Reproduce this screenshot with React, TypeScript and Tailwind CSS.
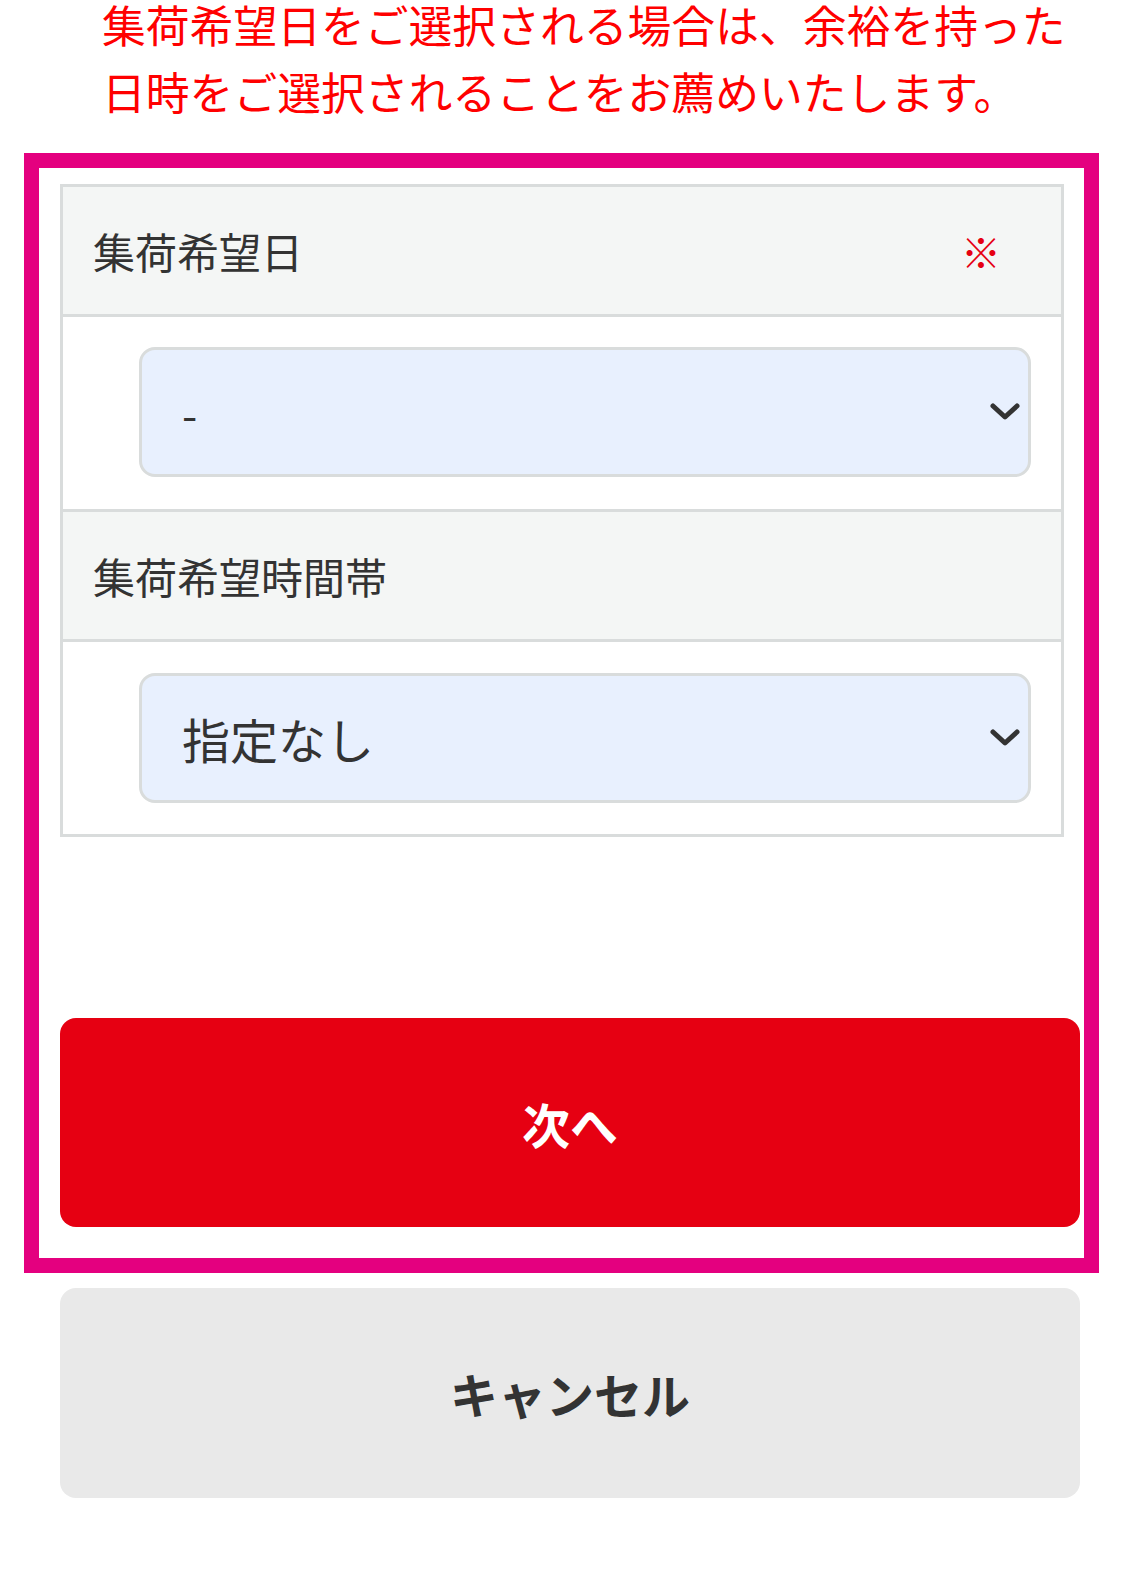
import React from "react";

function Chevron() {
  return (
    <svg width="30" height="20" viewBox="0 0 30 20" className="shrink-0">
      <polyline points="3,4 15,15 27,4" fill="none" stroke="#333" strokeWidth="5" strokeLinecap="round" strokeLinejoin="round" />
    </svg>
  );
}

function SelectBox({ value, big }: { value: string; big?: boolean }) {
  return (
    <div className="h-[130px] rounded-[16px] border-[3px] border-[#d9dcdc] bg-[#e8f0fe] flex items-center justify-between pl-[40px] pr-[8px]">
      <span className={big ? "text-[48px] text-[#333]" : "text-[44px] text-[#333] pt-[2px]"}>{value}</span>
      <Chevron />
    </div>
  );
}

export default function App() {
  return (
    <div className="w-[1125px] min-h-[1575px] bg-white" style={{ fontFamily: '"Noto Sans CJK JP", "Noto Sans", sans-serif' }}>
      <p className="mt-[-9px] pl-[102px] text-[43.8px] leading-[67px] text-[#ff0000]">
        集荷希望日をご選択される場合は、余裕を持った
        <br />
        日時をご選択されることをお薦めいたします。
      </p>

      <div className="ml-[24px] mt-[28px] w-[1075px] border-[15px] border-[#e4007f] pl-[21px] pr-[5px] pt-[16px] pb-[31px]">
        <div className="w-[1004px] border-[3px] border-[#d9dcdc]">
          <div className="h-[127px] bg-[#f4f6f5] flex items-center justify-between pl-[30px] pr-[60px]">
            <span className="text-[42px] text-[#333]">集荷希望日</span>
            <span className="text-[40px] text-[#e60012]">※</span>
          </div>
          <div className="border-t-[3px] border-[#d9dcdc] pl-[76px] pr-[30px] pt-[30px] pb-[32px]">
            <SelectBox value="-" />
          </div>
          <div className="h-[130px] border-t-[3px] border-[#d9dcdc] bg-[#f4f6f5] flex items-center pl-[30px]">
            <span className="text-[42px] text-[#333]">集荷希望時間帯</span>
          </div>
          <div className="border-t-[3px] border-[#d9dcdc] pl-[76px] pr-[30px] pt-[31px] pb-[31px]">
            <SelectBox value="指定なし" big />
          </div>
        </div>

        <button className="mt-[181px] w-[1020px] h-[209px] rounded-[16px] bg-[#e60012] text-white text-[48px] font-bold flex items-center justify-center">
          次へ
        </button>
      </div>

      <button className="ml-[60px] mt-[15px] w-[1020px] h-[210px] rounded-[16px] bg-[#e9e9e9] text-[#333] text-[48px] font-bold flex items-center justify-center">
        キャンセル
      </button>
    </div>
  );
}
